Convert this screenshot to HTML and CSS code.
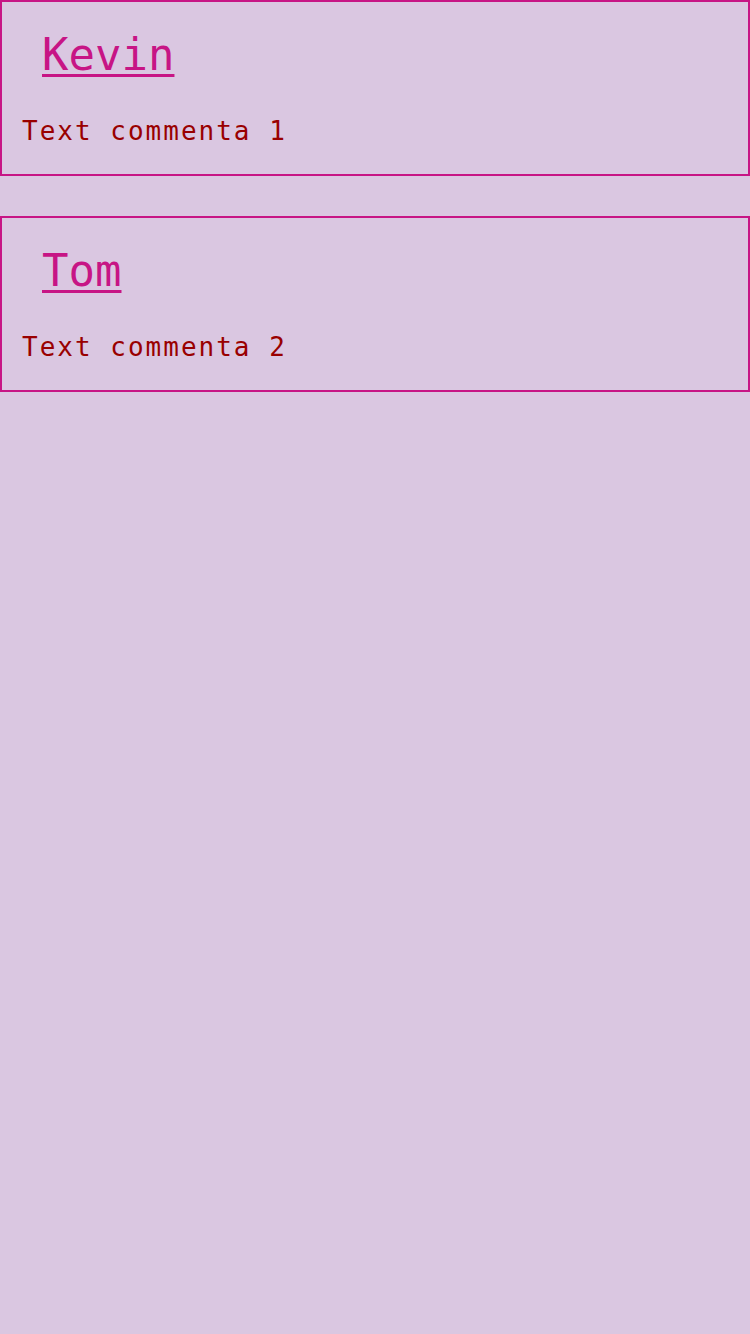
FILE: index.html
```html
<!DOCTYPE html>
<html>
<head>
<meta charset="utf-8">
<link rel="stylesheet" href="styles.css">
</head>
<body>
<div class="list">
  <div class="card">
    <a class="name" href="#">Kevin</a>
    <p class="text">Text commenta 1</p>
  </div>
  <div class="card">
    <a class="name" href="#">Tom</a>
    <p class="text">Text commenta 2</p>
  </div>
</div>
</body>
</html>
```
FILE: styles.css
```css
html, body {
  margin: 0;
  padding: 0;
  background: #dac7e1;
  font-family: "DejaVu Sans Mono", monospace;
}
.list {
  display: flex;
  flex-direction: column;
  gap: 40px;
}
.card {
  border: 2px solid #c71585;
  padding: 27px 20px 28px;
  display: flex;
  flex-direction: column;
  align-items: flex-start;
}
.name {
  font-size: 44px;
  color: #c71585;
  margin-left: 20px;
  text-decoration: underline;
  text-decoration-thickness: 3px;
  text-underline-offset: 4px;
  line-height: normal;
}
.text {
  margin: 36px 0 0;
  font-size: 26px;
  letter-spacing: 2px;
  color: #990000;
  line-height: normal;
}
```
